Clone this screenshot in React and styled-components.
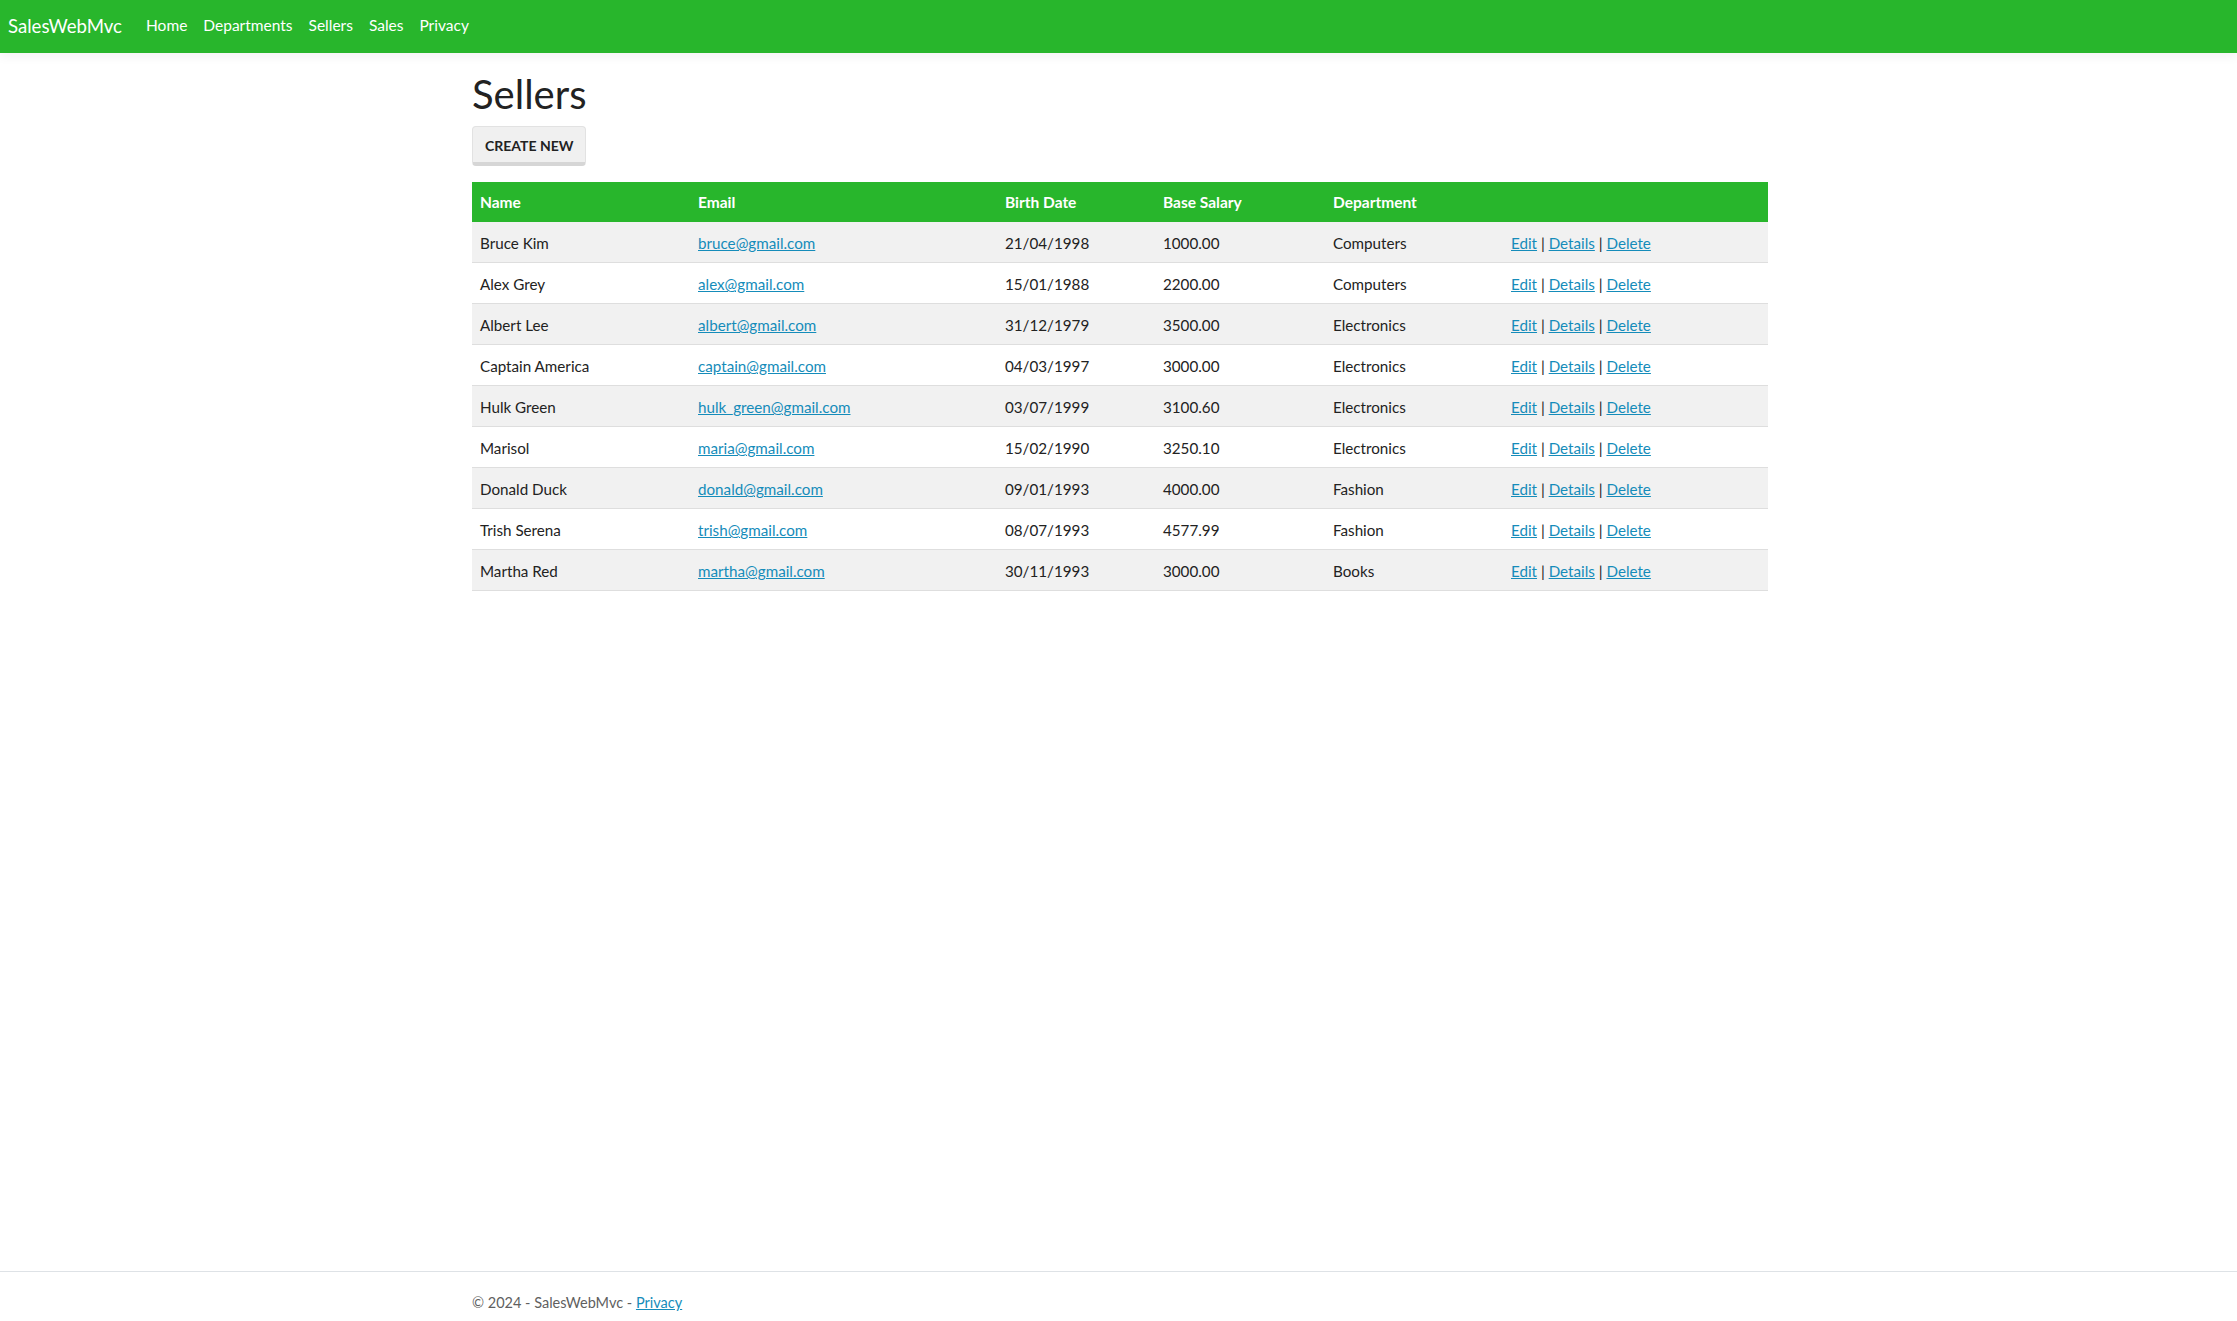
import React from "react";
import styled, { createGlobalStyle } from "styled-components";

const GREEN = "#28b62c";
const LINK = "#158cba";

const Global = createGlobalStyle`
  html, body { margin: 0; padding: 0; }
  body {
    font-family: Lato, "Open Sans", "Liberation Sans", sans-serif;
    font-size: 16px;
    line-height: 1.5;
    color: #222;
    background: #fff;
  }
  * { box-sizing: border-box; }
`;

const Page = styled.div`
  min-height: 100vh;
  display: flex;
  flex-direction: column;
`;

const Navbar = styled.nav`
  height: 53px;
  background: ${GREEN};
  display: flex;
  align-items: center;
  padding: 0 8px 2px;
  box-shadow: 0 4px 10px rgba(0, 0, 0, 0.05);
`;

const Brand = styled.a`
  color: #fff;
  font-size: 18.6px;
  text-decoration: none;
  margin-right: 16px;
  line-height: 30px;
`;

const NavList = styled.ul`
  display: flex;
  list-style: none;
  margin: 0;
  padding: 0;
`;

const NavLink = styled.a`
  display: block;
  color: #fff;
  text-decoration: none;
  padding: 8px;
  font-size: 15.5px;
`;

const Main = styled.main`
  flex: 1;
  width: 1296px;
  margin: 16px auto 0;
  padding-left: 3px;
  box-sizing: content-box;
`;

const Title = styled.h1`
  font-size: 40px;
  font-weight: 400;
  line-height: 48px;
  margin: 1px 0 8px;
  color: #222;
`;

const Button = styled.a`
  display: inline-block;
  background: #f0f0f0;
  border: 1px solid #e2e2e2;
  border-bottom: 4px solid #d6d6d6;
  border-radius: 4px;
  color: #222;
  font-weight: 700;
  font-size: 14px;
  text-transform: uppercase;
  text-decoration: none;
  padding: 7px 12px 5px;
  line-height: 23px;
`;

const Table = styled.table`
  width: 1296px;
  border-collapse: collapse;
  table-layout: fixed;
  margin-top: 16px;
`;

const HeadCell = styled.th`
  background: ${GREEN};
  color: #fff;
  font-weight: 700;
  text-align: left;
  padding: 8px;
  font-size: 15.5px;
  line-height: 24px;
`;

const Row = styled.tr`
  background: ${(p) => (p.$odd ? "#f1f1f1" : "#fff")};
  border-bottom: 1px solid #dedede;
`;

const Cell = styled.td`
  padding: 9px 8px 7px;
  font-size: 15.2px;
  line-height: 24px;
  white-space: nowrap;
`;

const Link = styled.a`
  color: ${LINK};
  text-decoration: underline;
`;

const Footer = styled.footer`
  border-top: 1px solid #dee2e6;
  height: 50px;
  padding-top: 19px;
`;

const FooterInner = styled.div`
  width: 1296px;
  margin: 0 auto;
  padding-left: 3px;
  box-sizing: content-box;
  color: #5f5f5f;
  font-size: 14.5px;
  line-height: 24px;
`;

const sellers = [
  ["Bruce Kim", "bruce@gmail.com", "21/04/1998", "1000.00", "Computers"],
  ["Alex Grey", "alex@gmail.com", "15/01/1988", "2200.00", "Computers"],
  ["Albert Lee", "albert@gmail.com", "31/12/1979", "3500.00", "Electronics"],
  ["Captain America", "captain@gmail.com", "04/03/1997", "3000.00", "Electronics"],
  ["Hulk Green", "hulk_green@gmail.com", "03/07/1999", "3100.60", "Electronics"],
  ["Marisol", "maria@gmail.com", "15/02/1990", "3250.10", "Electronics"],
  ["Donald Duck", "donald@gmail.com", "09/01/1993", "4000.00", "Fashion"],
  ["Trish Serena", "trish@gmail.com", "08/07/1993", "4577.99", "Fashion"],
  ["Martha Red", "martha@gmail.com", "30/11/1993", "3000.00", "Books"],
];

const widths = [218, 307, 158, 170, 178, null];

export default function App() {
  return (
    <Page>
      <Global />
      <Navbar>
        <Brand href="#">SalesWebMvc</Brand>
        <NavList>
          {["Home", "Departments", "Sellers", "Sales", "Privacy"].map((t) => (
            <li key={t}>
              <NavLink href="#">{t}</NavLink>
            </li>
          ))}
        </NavList>
      </Navbar>
      <Main>
        <Title>Sellers</Title>
        <Button href="#">Create New</Button>
        <Table>
          <colgroup>
            {widths.map((w, i) => (
              <col key={i} style={w ? { width: w } : undefined} />
            ))}
          </colgroup>
          <thead>
            <tr>
              <HeadCell>Name</HeadCell>
              <HeadCell>Email</HeadCell>
              <HeadCell>Birth Date</HeadCell>
              <HeadCell>Base Salary</HeadCell>
              <HeadCell>Department</HeadCell>
              <HeadCell />
            </tr>
          </thead>
          <tbody>
            {sellers.map((s, i) => (
              <Row key={s[0]} $odd={i % 2 === 0}>
                <Cell>{s[0]}</Cell>
                <Cell>
                  <Link href="#">{s[1]}</Link>
                </Cell>
                <Cell>{s[2]}</Cell>
                <Cell>{s[3]}</Cell>
                <Cell>{s[4]}</Cell>
                <Cell>
                  <Link href="#">Edit</Link> | <Link href="#">Details</Link> |{" "}
                  <Link href="#">Delete</Link>
                </Cell>
              </Row>
            ))}
          </tbody>
        </Table>
      </Main>
      <Footer>
        <FooterInner>
          © 2024 - SalesWebMvc - <Link href="#">Privacy</Link>
        </FooterInner>
      </Footer>
    </Page>
  );
}
